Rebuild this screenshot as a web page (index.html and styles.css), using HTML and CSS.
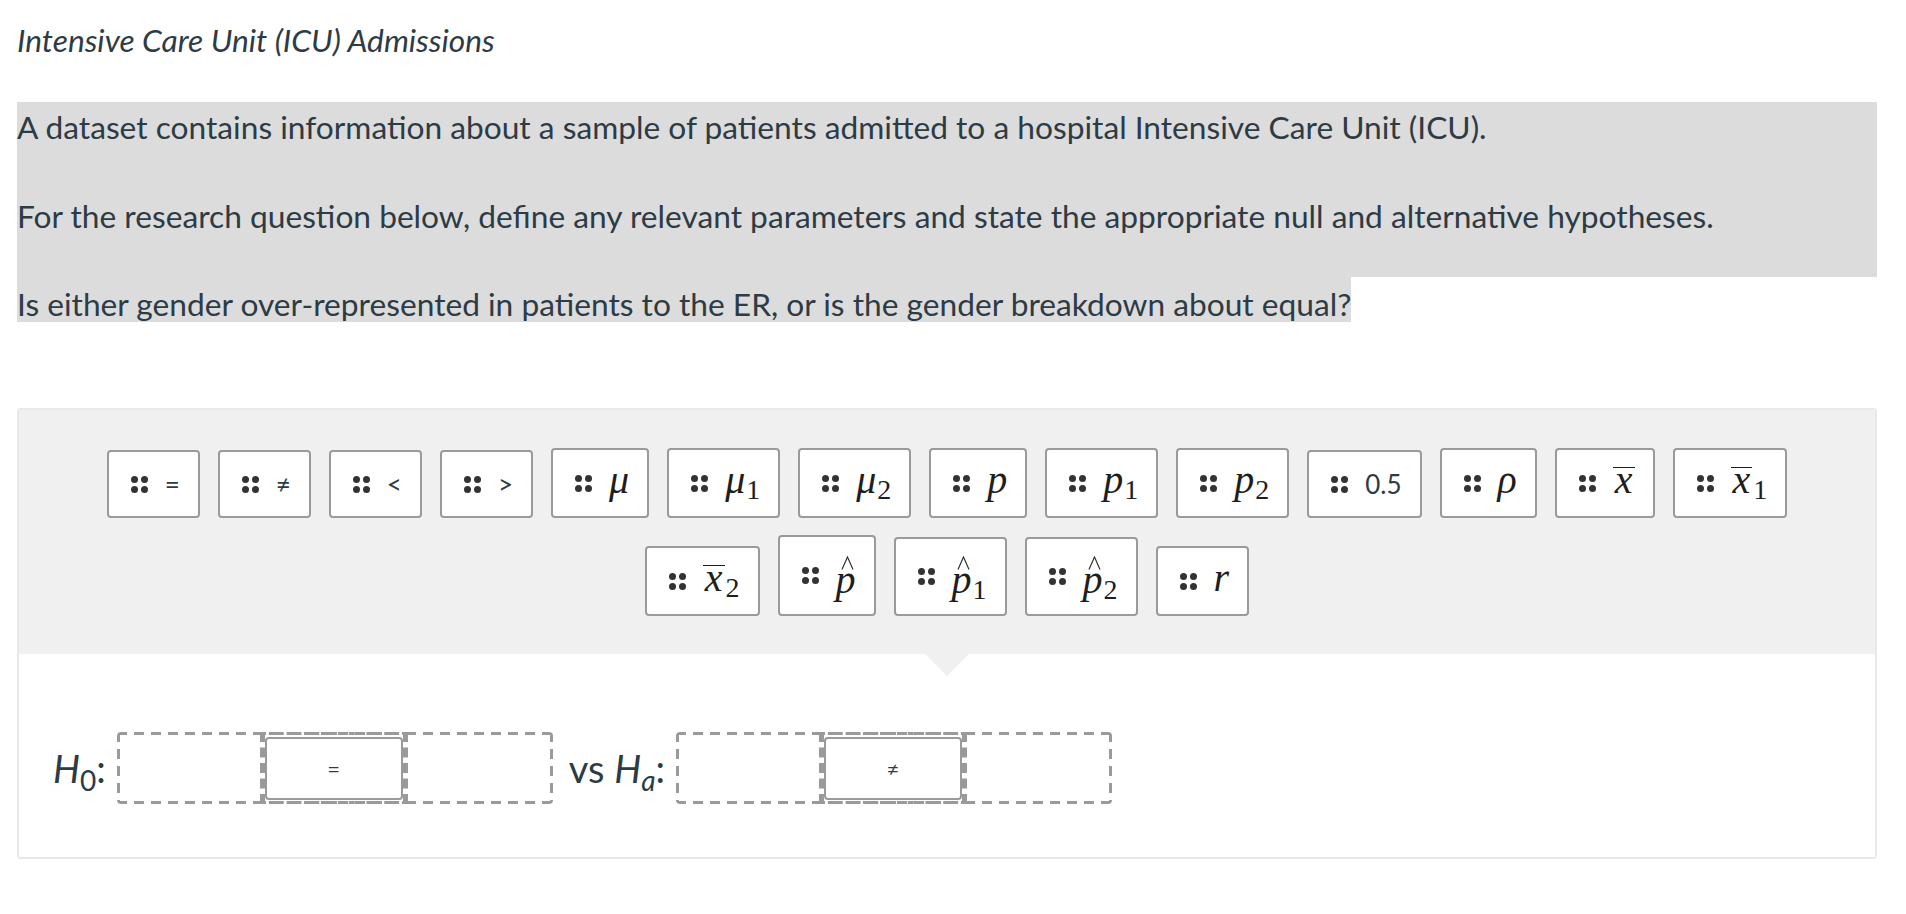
FILE: index.html
```html
<!DOCTYPE html>
<html lang="en">
<head>
<meta charset="utf-8">
<title>Intensive Care Unit (ICU) Admissions</title>
<link rel="stylesheet" href="styles.css">
</head>
<body>
<main class="page">
  <h1 class="title">Intensive Care Unit (ICU) Admissions</h1>

  <div class="prompt">
    <p class="para">A dataset contains information about a sample of patients admitted to a hospital Intensive Care Unit (ICU).</p>
    <p class="para">For the research question below, define any relevant parameters and state the appropriate null and alternative hypotheses.</p>
  </div>
  <p class="question"><span class="hl">Is either gender over-represented in patients to the ER, or is the gender breakdown about equal?</span></p>

  <section class="dnd">
    <div class="bank">
      <div class="tile"><svg class="grip" viewBox="0 0 17 17"><circle cx="3.5" cy="3.5" r="3.5"/><circle cx="13.5" cy="3.5" r="3.5"/><circle cx="3.5" cy="13.5" r="3.5"/><circle cx="13.5" cy="13.5" r="3.5"/></svg><span class="txt">=</span></div>
      <div class="tile"><svg class="grip" viewBox="0 0 17 17"><circle cx="3.5" cy="3.5" r="3.5"/><circle cx="13.5" cy="3.5" r="3.5"/><circle cx="3.5" cy="13.5" r="3.5"/><circle cx="13.5" cy="13.5" r="3.5"/></svg><span class="txt">≠</span></div>
      <div class="tile"><svg class="grip" viewBox="0 0 17 17"><circle cx="3.5" cy="3.5" r="3.5"/><circle cx="13.5" cy="3.5" r="3.5"/><circle cx="3.5" cy="13.5" r="3.5"/><circle cx="13.5" cy="13.5" r="3.5"/></svg><span class="txt">&lt;</span></div>
      <div class="tile"><svg class="grip" viewBox="0 0 17 17"><circle cx="3.5" cy="3.5" r="3.5"/><circle cx="13.5" cy="3.5" r="3.5"/><circle cx="3.5" cy="13.5" r="3.5"/><circle cx="13.5" cy="13.5" r="3.5"/></svg><span class="txt">&gt;</span></div>
      <div class="tile"><svg class="grip" viewBox="0 0 17 17"><circle cx="3.5" cy="3.5" r="3.5"/><circle cx="13.5" cy="3.5" r="3.5"/><circle cx="3.5" cy="13.5" r="3.5"/><circle cx="13.5" cy="13.5" r="3.5"/></svg><span class="math"><span class="mi">μ</span></span></div>
      <div class="tile"><svg class="grip" viewBox="0 0 17 17"><circle cx="3.5" cy="3.5" r="3.5"/><circle cx="13.5" cy="3.5" r="3.5"/><circle cx="3.5" cy="13.5" r="3.5"/><circle cx="13.5" cy="13.5" r="3.5"/></svg><span class="math"><span class="mi">μ</span><span class="sub">1</span></span></div>
      <div class="tile"><svg class="grip" viewBox="0 0 17 17"><circle cx="3.5" cy="3.5" r="3.5"/><circle cx="13.5" cy="3.5" r="3.5"/><circle cx="3.5" cy="13.5" r="3.5"/><circle cx="13.5" cy="13.5" r="3.5"/></svg><span class="math"><span class="mi">μ</span><span class="sub">2</span></span></div>
      <div class="tile"><svg class="grip" viewBox="0 0 17 17"><circle cx="3.5" cy="3.5" r="3.5"/><circle cx="13.5" cy="3.5" r="3.5"/><circle cx="3.5" cy="13.5" r="3.5"/><circle cx="13.5" cy="13.5" r="3.5"/></svg><span class="math"><span class="mi">p</span></span></div>
      <div class="tile"><svg class="grip" viewBox="0 0 17 17"><circle cx="3.5" cy="3.5" r="3.5"/><circle cx="13.5" cy="3.5" r="3.5"/><circle cx="3.5" cy="13.5" r="3.5"/><circle cx="13.5" cy="13.5" r="3.5"/></svg><span class="math"><span class="mi">p</span><span class="sub">1</span></span></div>
      <div class="tile"><svg class="grip" viewBox="0 0 17 17"><circle cx="3.5" cy="3.5" r="3.5"/><circle cx="13.5" cy="3.5" r="3.5"/><circle cx="3.5" cy="13.5" r="3.5"/><circle cx="13.5" cy="13.5" r="3.5"/></svg><span class="math"><span class="mi">p</span><span class="sub">2</span></span></div>
      <div class="tile"><svg class="grip" viewBox="0 0 17 17"><circle cx="3.5" cy="3.5" r="3.5"/><circle cx="13.5" cy="3.5" r="3.5"/><circle cx="3.5" cy="13.5" r="3.5"/><circle cx="13.5" cy="13.5" r="3.5"/></svg><span class="txt">0.5</span></div>
      <div class="tile"><svg class="grip" viewBox="0 0 17 17"><circle cx="3.5" cy="3.5" r="3.5"/><circle cx="13.5" cy="3.5" r="3.5"/><circle cx="3.5" cy="13.5" r="3.5"/><circle cx="13.5" cy="13.5" r="3.5"/></svg><span class="math"><span class="mi">ρ</span></span></div>
      <div class="tile"><svg class="grip" viewBox="0 0 17 17"><circle cx="3.5" cy="3.5" r="3.5"/><circle cx="13.5" cy="3.5" r="3.5"/><circle cx="3.5" cy="13.5" r="3.5"/><circle cx="13.5" cy="13.5" r="3.5"/></svg><span class="math"><span class="mi bar">x</span></span></div>
      <div class="tile"><svg class="grip" viewBox="0 0 17 17"><circle cx="3.5" cy="3.5" r="3.5"/><circle cx="13.5" cy="3.5" r="3.5"/><circle cx="3.5" cy="13.5" r="3.5"/><circle cx="13.5" cy="13.5" r="3.5"/></svg><span class="math"><span class="mi bar">x</span><span class="sub">1</span></span></div>
      <div class="tile"><svg class="grip" viewBox="0 0 17 17"><circle cx="3.5" cy="3.5" r="3.5"/><circle cx="13.5" cy="3.5" r="3.5"/><circle cx="3.5" cy="13.5" r="3.5"/><circle cx="13.5" cy="13.5" r="3.5"/></svg><span class="math"><span class="mi bar">x</span><span class="sub">2</span></span></div>
      <div class="tile"><svg class="grip" viewBox="0 0 17 17"><circle cx="3.5" cy="3.5" r="3.5"/><circle cx="13.5" cy="3.5" r="3.5"/><circle cx="3.5" cy="13.5" r="3.5"/><circle cx="13.5" cy="13.5" r="3.5"/></svg><span class="math tall"><span class="mi hat">p<svg class="acc" viewBox="0 0 13 14"><polyline points="1,13.5 6.5,1 12,13.5"/></svg></span></span></div>
      <div class="tile"><svg class="grip" viewBox="0 0 17 17"><circle cx="3.5" cy="3.5" r="3.5"/><circle cx="13.5" cy="3.5" r="3.5"/><circle cx="3.5" cy="13.5" r="3.5"/><circle cx="13.5" cy="13.5" r="3.5"/></svg><span class="math tall tall-sub"><span class="mi hat">p<svg class="acc" viewBox="0 0 13 14"><polyline points="1,13.5 6.5,1 12,13.5"/></svg></span><span class="sub">1</span></span></div>
      <div class="tile"><svg class="grip" viewBox="0 0 17 17"><circle cx="3.5" cy="3.5" r="3.5"/><circle cx="13.5" cy="3.5" r="3.5"/><circle cx="3.5" cy="13.5" r="3.5"/><circle cx="13.5" cy="13.5" r="3.5"/></svg><span class="math tall tall-sub"><span class="mi hat">p<svg class="acc" viewBox="0 0 13 14"><polyline points="1,13.5 6.5,1 12,13.5"/></svg></span><span class="sub">2</span></span></div>
      <div class="tile"><svg class="grip" viewBox="0 0 17 17"><circle cx="3.5" cy="3.5" r="3.5"/><circle cx="13.5" cy="3.5" r="3.5"/><circle cx="3.5" cy="13.5" r="3.5"/><circle cx="13.5" cy="13.5" r="3.5"/></svg><span class="math"><span class="mi">r</span></span></div>
    </div>

    <div class="answer">
      <span class="hyp hyp-null"><span class="hv">H</span><span class="hs">0</span>:</span>
      <div class="slots">
        <div class="slot"></div>
        <div class="slot filled"><div class="chip">=</div></div>
        <div class="slot slot-end"></div>
      </div>
      <span class="hyp vs">vs <span class="hv">H</span><span class="hs hs-it">a</span>:</span>
      <div class="slots">
        <div class="slot"></div>
        <div class="slot filled"><div class="chip">≠</div></div>
        <div class="slot slot-end"></div>
      </div>
    </div>
  </section>
</main>
</body>
</html>
```

FILE: styles.css
```css
* { box-sizing: border-box; }

html, body {
  margin: 0;
  background: #ffffff;
}

body {
  font-family: "Lato", "Liberation Sans", sans-serif;
  color: #2d3b45;
}

.page {
  padding: 0 29px 40px 17px;
}

.title {
  margin: 0;
  padding-top: 23px;
  font-size: 31.7px;
  line-height: 34px;
  font-weight: 400;
  font-style: italic;
}

.prompt {
  margin-top: 45px;
  background: #dcdcdc;
  padding: 3px 0 38px;
}

.para {
  margin: 0;
  font-size: 31.7px;
  line-height: 45px;
}

.para + .para {
  margin-top: 44px;
}

.question {
  margin: 0;
  font-size: 31.7px;
  line-height: 36px;
}

.hl {
  display: inline-block;
  padding-top: 9px;
  line-height: 36px;
  background: #dcdcdc;
}

/* drag & drop widget */
.dnd {
  margin-top: 86px;
  border: 2px solid #e8e8e8;
  border-radius: 4px;
}

.bank {
  position: relative;
  background: #f0f0f0;
  padding: 38px 60px 38px;
  display: flex;
  flex-wrap: wrap;
  justify-content: center;
  align-items: flex-end;
  gap: 17px 18px;
}

.bank::after {
  content: "";
  position: absolute;
  left: 50%;
  top: 100%;
  margin-left: -22px;
  border-left: 22px solid transparent;
  border-right: 22px solid transparent;
  border-top: 22px solid #f0f0f0;
}

.tile {
  display: flex;
  align-items: center;
  gap: 17px;
  padding: 12px 18px 12px 22px;
  background: #ffffff;
  border: 2px solid #9a9a9a;
  border-radius: 4px;
}

.grip {
  width: 17px;
  height: 17px;
  fill: #333333;
  flex: none;
}

.txt {
  font-size: 26px;
  line-height: 40px;
  color: #2d3b45;
}

.math {
  display: block;
  height: 42px;
  font-family: "Liberation Serif", "Times New Roman", serif;
  font-size: 40px;
  line-height: 36px;
  color: #1e1e1e;
  white-space: nowrap;
}

.math.tall {
  height: 53px;
  padding-top: 13px;
}

.math.tall-sub {
  height: 51px;
  padding-top: 11px;
}

.mi {
  font-style: italic;
}

.sub {
  font-style: normal;
  font-size: 28px;
  line-height: 0;
  vertical-align: -6px;
  margin-left: 1px;
}

.bar {
  display: inline-block;
  line-height: 23px;
  border-top: 1.5px solid #1e1e1e;
  padding: 0 2px;
}

.hat {
  position: relative;
}

.acc {
  position: absolute;
  left: 50%;
  top: -1px;
  width: 13px;
  height: 14px;
  margin-left: -5px;
  fill: none;
  stroke: #333333;
  stroke-width: 1.2;
}

/* hypotheses */
.answer {
  background: #ffffff;
  padding: 78px 20px 53px 34px;
  display: flex;
  align-items: center;
}

.hyp {
  font-size: 38px;
  line-height: 44px;
  color: #2d3b45;
  white-space: nowrap;
}

.hv {
  font-style: italic;
}

.hs {
  font-size: 28px;
  vertical-align: -8px;
  line-height: 0;
}

.hs-it {
  font-style: italic;
}

.hyp-null {
  margin-right: 11px;
}

.vs {
  margin: 0 11px 0 16px;
}

.slots {
  display: flex;
  height: 72px;
  padding: 3px;
  border-radius: 4px;
  background:
    repeating-linear-gradient(to right, #9a9a9a 0 10px, transparent 10px 17px) left top / 100% 3px no-repeat,
    repeating-linear-gradient(to right, #9a9a9a 0 10px, transparent 10px 17px) left bottom / 100% 3px no-repeat,
    repeating-linear-gradient(to bottom, #9a9a9a 0 10px, transparent 10px 17px) left top / 3px 100% no-repeat,
    repeating-linear-gradient(to bottom, #9a9a9a 0 10px, transparent 10px 17px) right top / 3px 100% no-repeat;
}

.slot {
  width: 140px;
}

.slot-end {
  width: 142px;
}

.slot.filled {
  width: auto;
  margin: -3px 0;
  padding: 2px 0 1px;
  border-style: dashed;
  border-color: #9a9a9a;
  border-width: 3px 5px;
}

.chip {
  width: 138px;
  height: 63px;
  border: 2px solid #9a9a9a;
  border-radius: 4px;
  background: #ffffff;
  display: flex;
  align-items: center;
  justify-content: center;
  font-size: 22px;
  color: #2d3b45;
}
```
